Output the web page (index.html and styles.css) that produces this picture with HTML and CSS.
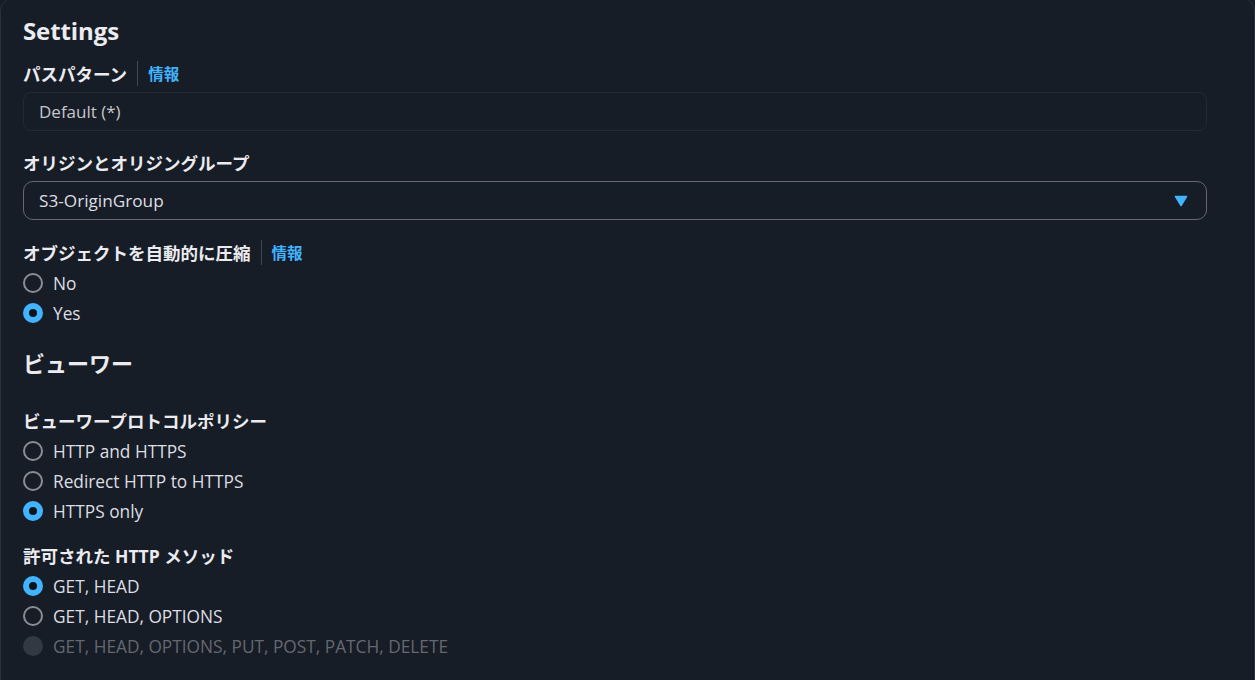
FILE: index.html
```html
<!DOCTYPE html>
<html lang="ja">
<head>
<meta charset="utf-8">
<title>Settings</title>
<link rel="stylesheet" href="styles.css">
</head>
<body>
<div class="panel">
  <h2 class="heading">Settings</h2>

  <div class="field">
    <div class="label-row"><span class="label">パスパターン</span><span class="divider"></span><a class="info">情報</a></div>
    <div class="input readonly">Default (*)</div>
  </div>

  <div class="field">
    <div class="label-row"><span class="label">オリジンとオリジングループ</span></div>
    <div class="input select">
      <span class="value">S3-OriginGroup</span>
      <svg class="caret" width="14" height="12" viewBox="0 0 14 12"><path d="M1.5 1.5 H12.5 L7 10.5 Z" fill="#42b4ff" stroke="#42b4ff" stroke-width="1.5" stroke-linejoin="round"/></svg>
    </div>
  </div>

  <div class="field gap-lg">
    <div class="label-row"><span class="label">オブジェクトを自動的に圧縮</span><span class="divider"></span><a class="info">情報</a></div>
    <div class="radios">
      <div class="radio"><span class="dot"></span><span>No</span></div>
      <div class="radio"><span class="dot checked"></span><span>Yes</span></div>
    </div>
  </div>

  <h2 class="heading sub">ビューワー</h2>

  <div class="field viewer">
    <div class="label-row"><span class="label">ビューワープロトコルポリシー</span></div>
    <div class="radios">
      <div class="radio"><span class="dot"></span><span>HTTP and HTTPS</span></div>
      <div class="radio"><span class="dot"></span><span>Redirect HTTP to HTTPS</span></div>
      <div class="radio"><span class="dot checked"></span><span>HTTPS only</span></div>
    </div>
  </div>

  <div class="field methods">
    <div class="label-row"><span class="label">許可された HTTP メソッド</span></div>
    <div class="radios">
      <div class="radio"><span class="dot checked"></span><span>GET, HEAD</span></div>
      <div class="radio"><span class="dot"></span><span>GET, HEAD, OPTIONS</span></div>
      <div class="radio disabled"><span class="dot"></span><span>GET, HEAD, OPTIONS, PUT, POST, PATCH, DELETE</span></div>
    </div>
  </div>
</div>
</body>
</html>
```

FILE: styles.css
```css
* { box-sizing: border-box; }
html, body {
  margin: 0;
  padding: 0;
  background: #161d26;
  height: 100%;
  overflow: hidden;
}
body {
  font-family: "Open Sans", "Noto Sans CJK JP", sans-serif;
  color: #dedee3;
  font-size: 17px;
}
.panel {
  width: 1255px;
  height: 720px;
  margin-top: -3px;
  border: 1px solid #2a313c;
  border-radius: 14px;
  padding: 18px 47px 0 22px;
}
.heading {
  margin: 0;
  font-size: 24px;
  line-height: 30px;
  font-weight: 700;
  color: #ebebf0;
  letter-spacing: -0.1px;
}
.heading.sub {
  margin-top: 20px;
  font-size: 22px;
  letter-spacing: 0;
}
.field {
  margin-top: 16px;
}
.field + .field { margin-top: 20px; }
.field.gap-lg { margin-top: 21px; }
.field.viewer { margin-top: 31px; }
.field.methods { margin-top: 18px; }
.label-row {
  display: flex;
  align-items: center;
  height: 22px;
}
.label {
  font-weight: 700;
  font-size: 17.5px;
  color: #ebebf0;
}
.divider {
  width: 1px;
  height: 25px;
  background: #424650;
  margin: 0 10px 0 10px;
}
.info {
  color: #42b4ff;
  font-weight: 700;
  font-size: 15.5px;
}
.input {
  margin-top: 8px;
  height: 39px;
  border-radius: 8px;
  display: flex;
  align-items: center;
  padding: 0 16px 0 15px;
  font-size: 17px;
}
.readonly {
  border: 1px solid #222a35;
  color: #c6c6cd;
}
.select {
  border: 1px solid #656871;
  border-radius: 10px;
  justify-content: space-between;
  padding: 0 18px 0 15px;
  color: #dedee3;
  font-size: 17.2px;
}
.value { display: block; }
.caret { display: block; }
.radios {
  margin-top: 5px;
  display: flex;
  flex-direction: column;
}
.radio {
  height: 30px;
  display: flex;
  align-items: center;
  gap: 10px;
  font-size: 17.3px;
  color: #dedee3;
}
.dot {
  width: 20px;
  height: 20px;
  border-radius: 50%;
  border: 2px solid #8c8c94;
  flex: none;
}
.dot.checked {
  border: 6px solid #42b4ff;
  background: #0f141a;
}
.radio.disabled { color: #656871; }
.radio.disabled .dot {
  border: none;
  background: #333943;
}
```
